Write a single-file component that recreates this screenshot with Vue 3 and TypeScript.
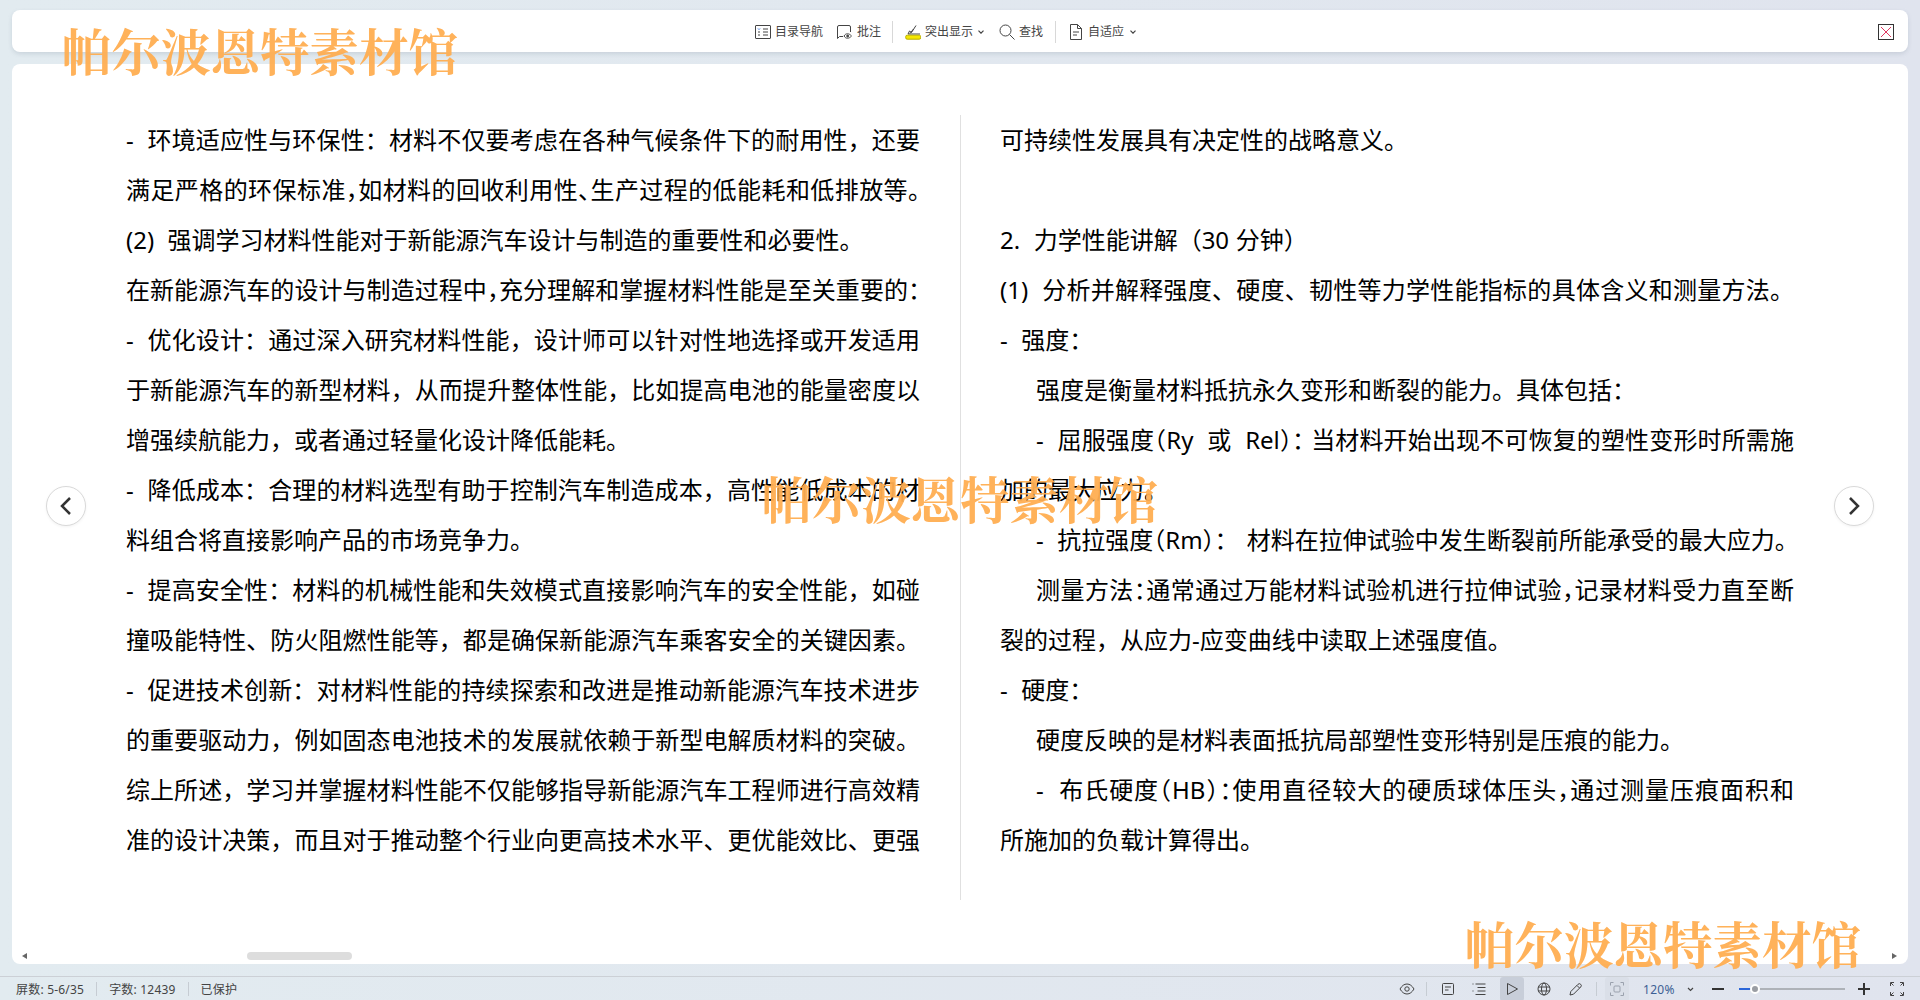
<script setup lang="ts">
interface Line { text: string; full?: boolean; indent?: boolean; halt?: boolean }
const left: Line[] = [
  { text: '-  环境适应性与环保性：材料不仅要考虑在各种气候条件下的耐用性，还要', full: true },
  { text: '满足严格的环保标准，如材料的回收利用性、生产过程的低能耗和低排放等。', full: true, halt: true },
  { text: '(2)  强调学习材料性能对于新能源汽车设计与制造的重要性和必要性。' },
  { text: '在新能源汽车的设计与制造过程中，充分理解和掌握材料性能是至关重要的：', full: true, halt: true },
  { text: '-  优化设计：通过深入研究材料性能，设计师可以针对性地选择或开发适用', full: true },
  { text: '于新能源汽车的新型材料，从而提升整体性能，比如提高电池的能量密度以', full: true },
  { text: '增强续航能力，或者通过轻量化设计降低能耗。' },
  { text: '-  降低成本：合理的材料选型有助于控制汽车制造成本，高性能低成本的材', full: true },
  { text: '料组合将直接影响产品的市场竞争力。' },
  { text: '-  提高安全性：材料的机械性能和失效模式直接影响汽车的安全性能，如碰', full: true },
  { text: '撞吸能特性、防火阻燃性能等，都是确保新能源汽车乘客安全的关键因素。', full: true },
  { text: '-  促进技术创新：对材料性能的持续探索和改进是推动新能源汽车技术进步', full: true },
  { text: '的重要驱动力，例如固态电池技术的发展就依赖于新型电解质材料的突破。', full: true },
  { text: '综上所述，学习并掌握材料性能不仅能够指导新能源汽车工程师进行高效精', full: true },
  { text: '准的设计决策，而且对于推动整个行业向更高技术水平、更优能效比、更强', full: true },
]
const right: Line[] = [
  { text: '可持续性发展具有决定性的战略意义。' },
  { text: ' ' },
  { text: '2.  力学性能讲解（30 分钟）' },
  { text: '(1)  分析并解释强度、硬度、韧性等力学性能指标的具体含义和测量方法。', full: true },
  { text: '-  强度：' },
  { text: '强度是衡量材料抵抗永久变形和断裂的能力。具体包括：', indent: true },
  { text: '-  屈服强度（Ry  或  Rel）： 当材料开始出现不可恢复的塑性变形时所需施', indent: true, full: true, halt: true },
  { text: '加的最大应力。' },
  { text: '-  抗拉强度（Rm）：   材料在拉伸试验中发生断裂前所能承受的最大应力。', indent: true, halt: true },
  { text: '测量方法：通常通过万能材料试验机进行拉伸试验，记录材料受力直至断', indent: true, full: true, halt: true },
  { text: '裂的过程，从应力-应变曲线中读取上述强度值。' },
  { text: '-  硬度：' },
  { text: '硬度反映的是材料表面抵抗局部塑性变形特别是压痕的能力。', indent: true },
  { text: '-  布氏硬度（HB）：使用直径较大的硬质球体压头，通过测量压痕面积和', indent: true, full: true, halt: true },
  { text: '所施加的负载计算得出。' },
]
const columns = [left, right]
</script>

<template>
  <div class="app" lang="zh-CN">
    <header class="toolbar">
      <div class="tools">
        <div class="tool">
          <svg width="16" height="16" viewBox="0 0 16 16" fill="none" stroke="#444" stroke-width="1"><rect x="0.5" y="1.5" width="15" height="13" rx="0.5"/><path d="M3 4.500l1 1 1-1" stroke="#2f6fe0"/><path d="M3 8h2M3 11h2M8 5h5M8 8h5M8 11h5"/></svg>
          <span>目录导航</span>
        </div>
        <div class="tool note">
          <svg width="16" height="16" viewBox="0 0 16 16" fill="none" stroke="#444" stroke-width="1"><path d="M7 12.500H3.500l-2 2V3a1.500 1.500 0 0 1 1.500-1.500h10A1.500 1.500 0 0 1 14.500 3v5"/><path d="M8 12c1-1.600 2-2.200 3.500-2.200S14 10.400 15.500 12c-1.500 1.600-2.500 2.200-4 2.200S9 13.600 8 12z"/><circle cx="11.700" cy="12" r="1" fill="#444"/></svg>
          <span>批注</span>
        </div>
        <i class="sep first"></i>
        <div class="tool">
          <svg width="16" height="16" viewBox="0 0 16 16" fill="none" stroke="#444" stroke-width="1"><path d="M3 10l1.500-3 2 1.500L11 1.500M3 10h12"/><path d="M5 9.500L8.500 5"/><rect x="0.700" y="11.200" width="15" height="4" rx="1.500" fill="#f5e700" stroke="#b9ae00"/></svg>
          <span>突出显示</span>
          <svg class="caret" width="6" height="4" viewBox="0 0 6 4" fill="none" stroke="#444" stroke-width="1.200"><path d="M0.500 0.700L3 3.200 5.500 0.700"/></svg>
        </div>
        <div class="tool find">
          <svg width="16" height="16" viewBox="0 0 16 16" fill="none" stroke="#444" stroke-width="1"><circle cx="6.500" cy="6.500" r="5.500"/><path d="M10.500 10.500l5 5"/></svg>
          <span>查找</span>
        </div>
        <i class="sep"></i>
        <div class="tool fit">
          <svg width="12" height="16" viewBox="0 0 12 16" fill="none" stroke="#444" stroke-width="1"><path d="M0.500 0.500h7l4 4v11h-11zM7.500 0.500v4h4M3 8h6M3 11h4"/></svg>
          <span>自适应</span>
          <svg class="caret" width="6" height="4" viewBox="0 0 6 4" fill="none" stroke="#444" stroke-width="1.200"><path d="M0.500 0.700L3 3.200 5.500 0.700"/></svg>
        </div>
      </div>
      <div class="close">
        <svg width="12" height="12" viewBox="0 0 12 12" fill="none" stroke="#e0365f" stroke-width="1"><path d="M1 1l10 10M11 1L1 11"/></svg>
      </div>
    </header>

    <main class="doc">
      <div class="pages">
        <template v-for="(col, c) in columns" :key="c">
          <i v-if="c === 1" class="rule"></i>
          <section class="page">
            <p
              v-for="(line, n) in col"
              :key="n"
              class="line"
              :class="{ full: line.full, indent: line.indent, halt: line.halt }"
            >{{ line.text }}</p>
          </section>
        </template>
      </div>
      <button class="nav prev">
        <svg width="12" height="18" viewBox="0 0 12 18" fill="none" stroke="#333" stroke-width="2.500"><path d="M10 1L2 9l8 8"/></svg>
      </button>
      <button class="nav next">
        <svg width="12" height="18" viewBox="0 0 12 18" fill="none" stroke="#333" stroke-width="2.500"><path d="M2 1l8 8-8 8"/></svg>
      </button>
      <i class="arrow arrow-l"></i>
      <i class="thumb"></i>
      <i class="arrow arrow-r"></i>
    </main>

    <footer class="status">
      <div class="stats">
        <span>屏数: 5-6/35</span><i class="bar"></i>
        <span>字数: 12439</span><i class="bar"></i>
        <span>已保护</span>
      </div>
      <div class="controls">
        <svg class="ico" width="16" height="16" viewBox="0 0 16 16" fill="none" stroke="#444"><path d="M1 8c2-3.300 4.200-5 7-5s5 1.700 7 5c-2 3.300-4.200 5-7 5S3 11.300 1 8z"/><circle cx="8" cy="8" r="2.200"/></svg>
        <i class="bar gap-a"></i>
        <svg class="ico gap-b" width="14" height="14" viewBox="0 0 14 14" fill="none" stroke="#444"><rect x="1.500" y="1.500" width="11" height="11" rx="1"/><path d="M4 5h6M4 8h3.500"/></svg>
        <svg class="ico gap-c" width="14" height="14" viewBox="0 0 14 14" fill="none" stroke="#444"><path d="M3.500 2h10M5.500 5.500h8M5.500 9h8M3.500 12.500h10M0.500 2h1M0.500 9h1"/></svg>
        <div class="box on">
          <svg width="14" height="14" viewBox="0 0 14 14" fill="none" stroke="#444"><path d="M2.500 1.500L12.500 7l-10 5.500z"/></svg>
        </div>
        <svg class="ico gap-d" width="14" height="14" viewBox="0 0 14 14" fill="none" stroke="#444"><circle cx="7" cy="7" r="6"/><ellipse cx="7" cy="7" rx="2.500" ry="6"/><path d="M1 5h12M1 9h12"/></svg>
        <svg class="ico gap-e" width="14" height="14" viewBox="0 0 14 14" fill="none" stroke="#444"><path d="M1 13l.8-3.500L9 2.300a1.500 1.500 0 0 1 2.700 2.700L4.500 12.200z"/><path d="M8 3.500l2.500 2.500"/></svg>
        <i class="bar gap-f"></i>
        <div class="box dim">
          <svg width="14" height="14" viewBox="0 0 14 14" fill="none" stroke="#9aa1ad"><path d="M.5 3.500v-3h3M10.500.5h3v3M13.500 10.500v3h-3M3.500 13.500h-3v-3"/><rect x="4" y="4" width="6" height="6" rx="1"/></svg>
        </div>
        <span class="zoom">120%</span>
        <svg class="ico gap-g" width="7" height="5" viewBox="0 0 7 5" fill="none" stroke="#444" stroke-width="1.200"><path d="M1 1l2.500 2.500L6 1"/></svg>
        <i class="minus"></i>
        <div class="slider"><i class="fill"></i><i class="knob"></i></div>
        <i class="plus"></i>
        <svg class="ico gap-h" width="14" height="14" viewBox="0 0 14 14" fill="none" stroke="#444"><path d="M.5 4V.5H4M10 .5h3.500V4M13.500 10v3.500H10M4 13.500H.5V10M1 1l2.500 2.500M13 1l-2.500 2.500M13 13l-2.500-2.500M1 13l2.500-2.500"/></svg>
      </div>
    </footer>

    <div class="mark mark-a">帕尔波恩特素材馆</div>
    <div class="mark mark-b">帕尔波恩特素材馆</div>
    <div class="mark mark-c">帕尔波恩特素材馆</div>
  </div>
</template>

<style>
html, body { margin: 0; padding: 0; }
</style>

<style scoped>
.app {
  position: relative;
  width: 1920px;
  height: 1000px;
  overflow: hidden;
  display: flex;
  flex-direction: column;
  background: linear-gradient(90deg, #e2ebf0, #e0e4ee);
  font-family: "Noto Sans", "Noto Sans CJK SC", sans-serif;
  color: #333;
}
.toolbar {
  margin: 10px 12px 0;
  height: 42px;
  box-sizing: border-box;
  padding-top: 2px;
  flex: none;
  display: flex;
  align-items: center;
  position: relative;
  background: #fff;
  border-radius: 8px;
  box-shadow: 0 2px 4px rgba(120, 130, 150, 0.22);
}
.tools {
  display: flex;
  align-items: center;
  margin-left: 743px;
  font-size: 12px;
  color: #444;
}
.tool { display: flex; align-items: center; gap: 4px; margin-right: 13px; }
.tool span { line-height: 16px; }
.note { gap: 5px; }
.find { margin-left: 2px; }
.fit { margin-left: 2px; gap: 6px; }
.caret { margin-left: 1px; }
.fit .caret { margin-left: 0; }
.sep { width: 1px; height: 22px; background: #d8d8d8; margin: 0 12px 0 -1px; }
.sep.first { margin-left: -2px; }
.close {
  position: absolute;
  right: 14px;
  top: 14px;
  width: 14px;
  height: 14px;
  border: 1px solid #333;
  display: flex;
  align-items: center;
  justify-content: center;
}
.doc {
  position: relative;
  flex: none;
  height: 900px;
  margin: 12px 12px 0;
  background: #fff;
  border-radius: 8px;
  box-sizing: border-box;
  padding: 51px 114px 0;
}
.pages { display: flex; }
.page { width: 794px; flex: none; height: 785px; }
.rule { width: 1px; height: 785px; background: #e0e0e0; flex: none; margin: 0 39px 0 40px; }
.line {
  margin: 0;
  height: 50px;
  line-height: 50px;
  font-size: 24px;
  color: #000;
  white-space: pre;
  word-spacing: 0.5px;
}
.line.full { white-space: pre-wrap; text-align: justify; text-align-last: justify; }
.line.indent { padding-left: 36px; }
.line.halt { font-feature-settings: "halt"; }
.nav {
  position: absolute;
  top: 422px;
  width: 40px;
  height: 40px;
  padding: 0;
  border: 1px solid #d9d9d9;
  border-radius: 50%;
  background: #fff;
  display: flex;
  align-items: center;
  justify-content: center;
  box-shadow: 0 1px 3px rgba(0, 0, 0, 0.05);
}
.prev { left: 34px; }
.next { right: 34px; }
.arrow {
  position: absolute;
  top: 889px;
  width: 0;
  height: 0;
  border-top: 3.500px solid transparent;
  border-bottom: 3.500px solid transparent;
}
.arrow-l { left: 10px; border-right: 5px solid #666; }
.arrow-r { right: 11px; border-left: 5px solid #666; }
.thumb {
  position: absolute;
  left: 235px;
  top: 888px;
  width: 105px;
  height: 8px;
  border-radius: 4px;
  background: #ddd;
}
.status {
  margin-top: 12px;
  flex: 1;
  border-top: 1px solid #ccd0d6;
  display: flex;
  align-items: center;
  justify-content: space-between;
  font-size: 12px;
  color: #444;
  box-sizing: border-box;
}
.stats { display: flex; align-items: center; padding-left: 16px; letter-spacing: 0.2px; }
.bar { display: block; width: 1px; height: 14px; background: #c6ccd3; }
.stats .bar { margin: 0 12px; }
.controls { display: flex; align-items: center; height: 100%; padding-right: 16px; }
.ico { display: block; flex: none; }
.gap-a { margin-left: 11px; }
.gap-b { margin-left: 14px; }
.gap-c { margin-left: 17px; }
.box {
  width: 24px;
  height: 24px;
  margin-left: 14px;
  border-radius: 3px;
  display: flex;
  align-items: center;
  justify-content: center;
}
.on { background: #c8ced9; }
.dim { background: #dadfe8; margin-left: 8px; }
.gap-d { margin-left: 13px; }
.gap-e { margin-left: 18px; }
.gap-f { margin-left: 13px; }
.zoom { margin-left: 14px; color: #3d5f94; width: 33px; letter-spacing: 0.3px; }
.gap-g { margin-left: 11px; }
.minus { width: 12px; height: 2px; background: #333; margin-left: 18px; }
.slider { position: relative; width: 106px; height: 2px; background: #aeb2b8; margin-left: 15px; }
.fill { position: absolute; left: 0; top: 0; width: 12px; height: 2px; background: #2b66d9; }
.knob {
  position: absolute;
  left: 11px;
  top: -4px;
  width: 6px;
  height: 6px;
  border: 2px solid #fff;
  background: #9a9da3;
  border-radius: 50%;
}
.plus {
  position: relative;
  width: 12px;
  height: 2px;
  background: #333;
  margin-left: 13px;
}
.plus::after {
  content: "";
  position: absolute;
  left: 5px;
  top: -5px;
  width: 2px;
  height: 12px;
  background: #333;
}
.gap-h { margin-left: 20px; }
.mark {
  position: absolute;
  font-family: "Noto Serif CJK SC", "Liberation Serif", "Noto Sans CJK SC", serif;
  font-weight: 700;
  font-size: 49.500px;
  line-height: 60px;
  color: #ffae52;
  white-space: nowrap;
  pointer-events: none;
  opacity: 0.95;
}
.mark-a { left: 62px; top: 20px; }
.mark-b { left: 762px; top: 468px; }
.mark-c { left: 1465px; top: 913px; }
</style>
